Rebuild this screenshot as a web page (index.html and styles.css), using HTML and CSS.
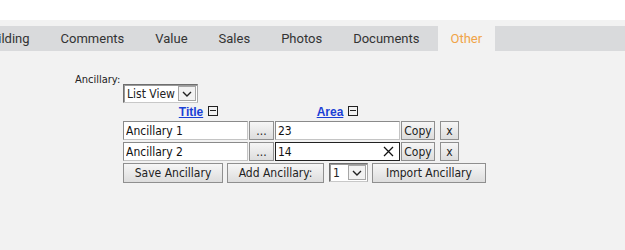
FILE: index.html
```html
<!DOCTYPE html>
<html lang="en">
<head>
    <meta charset="UTF-8">
    <title>Property - Other</title>
    <link rel="stylesheet" href="styles.css">
</head>
<body>
    <!-- Header -->
    <div class="top"></div>

    <!-- Tabs -->
    <div class="tab-strip">
        <div class="tabs">
            <a class="tab first">Building</a>
            <a class="tab">Comments</a>
            <a class="tab">Value</a>
            <a class="tab">Sales</a>
            <a class="tab">Photos</a>
            <a class="tab">Documents</a>
            <a class="tab active">Other</a>
        </div>
    </div>

    <!-- Ancillary -->
    <div class="content">
        <div class="label">Ancillary:</div>
        <div class="panel">
            <div class="select view-select">
                <span class="select-text">List View</span>
                <span class="select-arrow">
                    <svg width="10" height="6" viewBox="0 0 10 6"><path d="M1 1 L5 5 L9 1" fill="none" stroke="#222" stroke-width="1.4"/></svg>
                </span>
            </div>

            <div class="row head">
                <div class="head-cell title-cell"><a href="#" class="sort">Title</a><span class="collapse"></span></div>
                <div class="head-cell area-cell"><a href="#" class="sort">Area</a><span class="collapse"></span></div>
            </div>

            <div class="row">
                <input class="field" type="text" value="Ancillary 1">
                <button class="btn more">...</button>
                <input class="field" type="text" value="23">
                <button class="btn copy">Copy</button>
                <button class="btn del">x</button>
            </div>
            <div class="row">
                <input class="field" type="text" value="Ancillary 2">
                <button class="btn more">...</button>
                <div class="field focus">
                    <span>14</span>
                    <svg width="11" height="11" viewBox="0 0 11 11"><path d="M1 1 L10 10 M10 1 L1 10" stroke="#111" stroke-width="1.3"/></svg>
                </div>
                <button class="btn copy">Copy</button>
                <button class="btn del">x</button>
            </div>

            <div class="row actions">
                <button class="btn save">Save Ancillary</button>
                <button class="btn add">Add Ancillary:</button>
                <div class="select count-select">
                    <span class="select-text">1</span>
                    <span class="select-arrow">
                        <svg width="10" height="6" viewBox="0 0 10 6"><path d="M1 1 L5 5 L9 1" fill="none" stroke="#222" stroke-width="1.4"/></svg>
                    </span>
                </div>
                <button class="btn import">Import Ancillary</button>
            </div>
        </div>
    </div>
</body>
</html>
```

FILE: styles.css
```css
body {
    margin: 0;
    background-color: #f2f2f2;
    font-family: Tahoma, "DejaVu Sans Condensed", "Liberation Sans", sans-serif;
    font-size: 11px;
    color: #222;
    overflow: hidden;
}
.top {
    height: 20px;
    background-color: #fff;
}
.tab-strip {
    padding-top: 6px;
    overflow: hidden;
}
.tabs {
    display: flex;
    height: 25px;
    background-color: #d9dadc;
    margin-left: -30px;
}
.tab {
    display: flex;
    align-items: center;
    padding: 0 13px;
    margin-right: 5px;
    font-family: Roboto, sans-serif;
    font-size: 13px;
    color: #333;
}
.tab.active {
    background-color: #f2f2f2;
    color: #f0a448;
}
.content {
    display: flex;
    padding: 22px 0 0 75px;
}
.label {
    width: 48px;
    line-height: 14px;
}
.panel {
    display: flex;
    flex-direction: column;
    padding-top: 11px;
}
.select {
    display: flex;
    align-items: center;
    justify-content: space-between;
    box-sizing: border-box;
    height: 19px;
    background-color: #fff;
    border: 1px solid #6e6e6e;
    border-right-color: #a8a8a8;
    border-bottom-color: #c8c8c8;
    box-shadow: inset 1px 1px 0 #9a9a9a;
    padding: 0 1px 0 3px;
    font-size: 12px;
}
.view-select {
    width: 75px;
}
.count-select {
    width: 39px;
    margin-right: 4px;
}
.select-arrow {
    display: flex;
    align-items: center;
    justify-content: center;
    box-sizing: border-box;
    width: 18px;
    height: 15px;
    background-color: #f2f2f2;
    border: 1px solid #a6a6a6;
}
.row {
    display: flex;
    gap: 1px;
    margin-top: 2px;
}
.head {
    height: 15px;
    margin-top: 1px;
}
.head-cell {
    display: flex;
    align-items: center;
    justify-content: center;
    gap: 5px;
}
.title-cell {
    width: 151px;
}
.area-cell {
    width: 125px;
}
.sort {
    font-family: "Liberation Sans", Arial, sans-serif;
    font-size: 12px;
    font-weight: bold;
    color: #1a3fd6;
    text-decoration: underline;
}
.collapse {
    position: relative;
    width: 8px;
    height: 8px;
    border: 1px solid #222;
    margin-top: -2px;
}
.collapse::after {
    content: "";
    position: absolute;
    left: 1px;
    top: 3px;
    width: 6px;
    height: 1px;
    background-color: #222;
}
.field {
    box-sizing: border-box;
    width: 125px;
    height: 19px;
    margin: 0;
    padding: 0 2px;
    border: 1px solid #8a8a8a;
    border-right-color: #c4c4c4;
    border-bottom-color: #c4c4c4;
    background-color: #fff;
    font-family: inherit;
    font-size: 12px;
    color: #111;
}
.field.focus {
    display: flex;
    align-items: center;
    justify-content: space-between;
    border: 1px solid #222;
    padding-right: 5px;
}
.btn {
    box-sizing: border-box;
    height: 19px;
    margin: 0;
    padding: 0;
    border: 1px solid #8f8f8f;
    background: linear-gradient(#f6f6f6, #dddddd);
    font-family: inherit;
    font-size: 12px;
    color: #222;
}
.more {
    width: 25px;
}
.copy {
    width: 34px;
}
.del {
    width: 19px;
    margin-left: 4px;
}
.actions {
    gap: 0;
    height: 20px;
    margin-top: 2px;
}
.actions .btn {
    height: 20px;
}
.save {
    width: 100px;
    margin-right: 4px;
}
.add {
    width: 97px;
    margin-right: 5px;
}
.import {
    width: 114px;
}
```
